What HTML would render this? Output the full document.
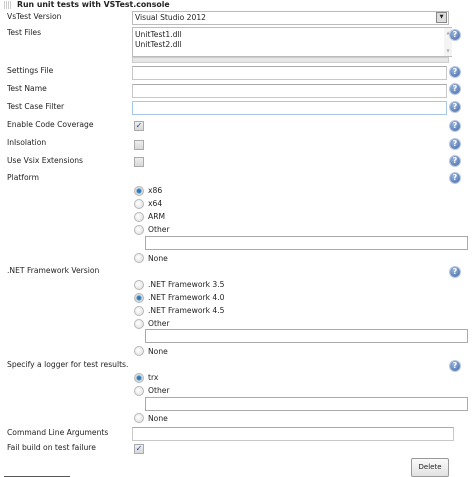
<!DOCTYPE html>
<html><head><style>
body{margin:0;width:475px;height:477px;background:#fff;position:relative;overflow:hidden;font-family:"DejaVu Sans","Liberation Sans",sans-serif;font-size:7.6px;color:#222}
.a{position:absolute}
.l{position:absolute;left:7px;line-height:10px}
.in{position:absolute;left:132px;width:313px;height:12px;border:1px solid #c8c8c8;border-top-color:#aaa;background:#fff}
.h{position:absolute;left:450px;width:10px;height:10px;border-radius:50%;background:radial-gradient(circle at 40% 35%,#9bb6dd,#3d64a8);color:#fff;font:bold 8px "DejaVu Sans",sans-serif;text-align:center;line-height:10px;box-shadow:0 0 0 1px #b8c8e0}
.cb{position:absolute;left:134px;width:8px;height:8px;border:1px solid #aaa;background:linear-gradient(#eee,#d8d8d8);color:#2a47a8;font-size:8px;line-height:8px;text-align:center}
.r{position:absolute;left:134px;width:8px;height:8px;border-radius:50%;border:1px solid #b8b8b8;background:radial-gradient(circle at 40% 40%,#fff,#ddd)}
.r.on{background:radial-gradient(circle,#2a6aa8 0,#3c8ac8 2px,#ddd 3px)}
.rl{position:absolute;left:148px;line-height:10px}
.sb{position:absolute;left:145px;width:321px;height:12px;border:1px solid #aaa;background:#fff}
</style></head><body>
<div class="a" style="left:4px;top:1px;width:8px;height:8px;background:repeating-linear-gradient(90deg,#ccc 0 1px,#fff 1px 2px)"></div>
<div class="a" style="left:17px;top:0;font-weight:bold;font-size:7.8px;line-height:10px">Run unit tests with VSTest.console</div>

<div class="l" style="top:12px">VsTest Version</div>
<div class="a" style="left:132px;top:11px;width:313px;height:12px;border:1px solid #bbb;background:#fff;line-height:12px;padding-left:2px;box-sizing:content-box">Visual Studio 2012</div>
<div class="a" style="left:436px;top:12px;width:9px;height:9px;border:1px solid #888;background:#ddd;font-size:5px;text-align:center;line-height:9px">▼</div>

<div class="l" style="top:28px">Test Files</div>
<div class="a" style="left:132px;top:27px;width:320px;height:30px;border:1px solid #bbb;background:#fff;line-height:10px;padding:2px 0 0 2px;box-sizing:border-box">UnitTest1.dll<br>UnitTest2.dll</div>
<div class="a" style="left:444px;top:28px;width:8px;height:28px;background:#f4f4f4;color:#aaa;font-size:4px;text-align:center;line-height:9px">▲<br><br>▼</div>
<div class="a" style="left:132px;top:57px;width:315px;height:4px;background:#e6e6e6;border:1px solid #ccc"></div>
<div class="h" style="top:30px">?</div>

<div class="l" style="top:66px">Settings File</div><div class="in" style="top:66px"></div><div class="h" style="top:67px">?</div>
<div class="l" style="top:84px">Test Name</div><div class="in" style="top:84px"></div><div class="h" style="top:84px">?</div>
<div class="l" style="top:102px">Test Case Filter</div><div class="in" style="top:101px;border-color:#a8c8e8"></div><div class="h" style="top:102px">?</div>
<div class="l" style="top:120px">Enable Code Coverage</div><div class="cb" style="top:121px">✓</div><div class="h" style="top:121px">?</div>
<div class="l" style="top:138px">InIsolation</div><div class="cb" style="top:140px"></div><div class="h" style="top:139px">?</div>
<div class="l" style="top:156px">Use Vsix Extensions</div><div class="cb" style="top:157px"></div><div class="h" style="top:156px">?</div>
<div class="l" style="top:173px">Platform</div><div class="h" style="top:173px">?</div>

<div class="r on" style="top:186px"></div><div class="rl" style="top:186px">x86</div>
<div class="r" style="top:199px"></div><div class="rl" style="top:199px">x64</div>
<div class="r" style="top:212px"></div><div class="rl" style="top:212px">ARM</div>
<div class="r" style="top:225px"></div><div class="rl" style="top:225px">Other</div>
<div class="sb" style="top:236px"></div>
<div class="r" style="top:253px"></div><div class="rl" style="top:254px">None</div>

<div class="l" style="top:266px">.NET Framework Version</div><div class="h" style="top:267px">?</div>
<div class="r" style="top:280px"></div><div class="rl" style="top:280px">.NET Framework 3.5</div>
<div class="r on" style="top:293px"></div><div class="rl" style="top:293px">.NET Framework 4.0</div>
<div class="r" style="top:306px"></div><div class="rl" style="top:306px">.NET Framework 4.5</div>
<div class="r" style="top:319px"></div><div class="rl" style="top:319px">Other</div>
<div class="sb" style="top:329px"></div>
<div class="r" style="top:346px"></div><div class="rl" style="top:347px">None</div>

<div class="l" style="top:360px">Specify a logger for test results.</div><div class="h" style="top:361px">?</div>
<div class="r on" style="top:373px"></div><div class="rl" style="top:373px">trx</div>
<div class="r" style="top:386px"></div><div class="rl" style="top:386px">Other</div>
<div class="sb" style="top:397px"></div>
<div class="r" style="top:413px"></div><div class="rl" style="top:414px">None</div>

<div class="l" style="top:428px">Command Line Arguments</div>
<div class="in" style="top:427px;width:320px"></div>
<div class="l" style="top:443px">Fail build on test failure</div><div class="cb" style="top:444px">✓</div>

<div class="a" style="left:411px;top:458px;width:36px;height:17px;border:1px solid #999;border-radius:2px;background:linear-gradient(#fafafa,#e2e2e2);font-size:7px;text-align:center;line-height:17px">Delete</div>
<div class="a" style="left:4px;top:476px;width:66px;height:1px;background:#555"></div>
</body></html>
